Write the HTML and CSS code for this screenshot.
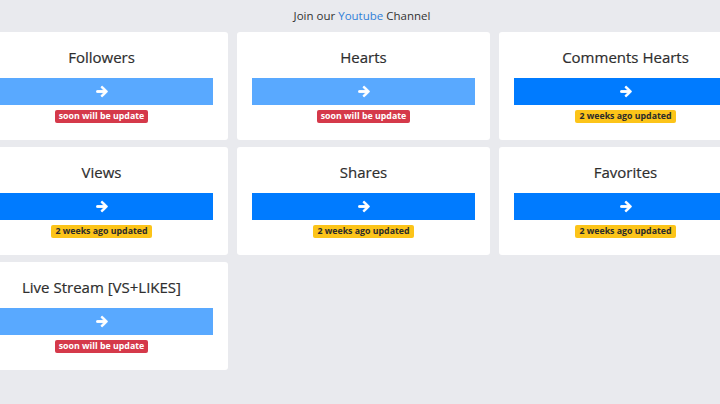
FILE: index.html
```html
<!DOCTYPE html>
<html lang="en">
<head>
<meta charset="utf-8">
<title>Dashboard</title>
<link rel="stylesheet" href="styles.css">
</head>
<body>
<header class="top">Join our <a class="yt" href="#">Youtube</a> Channel</header>
<main class="grid">
  <section class="card">
    <h2 class="title">Followers</h2>
    <a class="bar bar-off" href="#"><svg class="arrow" viewBox="-20 0 488 512"><path d="M190.5 66.9l22.2-22.2c9.4-9.4 24.6-9.4 33.9 0L441 239c9.4 9.4 9.4 24.6 0 33.9L246.6 467.3c-9.4 9.4-24.6 9.4-33.9 0l-22.2-22.2c-9.5-9.5-9.3-25 .4-34.3L311.4 296H24c-13.3 0-24-10.7-24-24v-32c0-13.3 10.7-24 24-24h287.4L190.9 101.2c-9.8-9.3-10-24.8-.4-34.3z"/></svg></a>
    <span class="badge badge-red">soon will be update</span>
  </section>
  <section class="card">
    <h2 class="title">Hearts</h2>
    <a class="bar bar-off" href="#"><svg class="arrow" viewBox="-20 0 488 512"><path d="M190.5 66.9l22.2-22.2c9.4-9.4 24.6-9.4 33.9 0L441 239c9.4 9.4 9.4 24.6 0 33.9L246.6 467.3c-9.4 9.4-24.6 9.4-33.9 0l-22.2-22.2c-9.5-9.5-9.3-25 .4-34.3L311.4 296H24c-13.3 0-24-10.7-24-24v-32c0-13.3 10.7-24 24-24h287.4L190.9 101.2c-9.8-9.3-10-24.8-.4-34.3z"/></svg></a>
    <span class="badge badge-red">soon will be update</span>
  </section>
  <section class="card">
    <h2 class="title">Comments Hearts</h2>
    <a class="bar" href="#"><svg class="arrow" viewBox="-20 0 488 512"><path d="M190.5 66.9l22.2-22.2c9.4-9.4 24.6-9.4 33.9 0L441 239c9.4 9.4 9.4 24.6 0 33.9L246.6 467.3c-9.4 9.4-24.6 9.4-33.9 0l-22.2-22.2c-9.5-9.5-9.3-25 .4-34.3L311.4 296H24c-13.3 0-24-10.7-24-24v-32c0-13.3 10.7-24 24-24h287.4L190.9 101.2c-9.8-9.3-10-24.8-.4-34.3z"/></svg></a>
    <span class="badge badge-yellow">2 weeks ago updated</span>
  </section>
  <section class="card">
    <h2 class="title">Views</h2>
    <a class="bar" href="#"><svg class="arrow" viewBox="-20 0 488 512"><path d="M190.5 66.9l22.2-22.2c9.4-9.4 24.6-9.4 33.9 0L441 239c9.4 9.4 9.4 24.6 0 33.9L246.6 467.3c-9.4 9.4-24.6 9.4-33.9 0l-22.2-22.2c-9.5-9.5-9.3-25 .4-34.3L311.4 296H24c-13.3 0-24-10.7-24-24v-32c0-13.3 10.7-24 24-24h287.4L190.9 101.2c-9.8-9.3-10-24.8-.4-34.3z"/></svg></a>
    <span class="badge badge-yellow">2 weeks ago updated</span>
  </section>
  <section class="card">
    <h2 class="title">Shares</h2>
    <a class="bar" href="#"><svg class="arrow" viewBox="-20 0 488 512"><path d="M190.5 66.9l22.2-22.2c9.4-9.4 24.6-9.4 33.9 0L441 239c9.4 9.4 9.4 24.6 0 33.9L246.6 467.3c-9.4 9.4-24.6 9.4-33.9 0l-22.2-22.2c-9.5-9.5-9.3-25 .4-34.3L311.4 296H24c-13.3 0-24-10.7-24-24v-32c0-13.3 10.7-24 24-24h287.4L190.9 101.2c-9.8-9.3-10-24.8-.4-34.3z"/></svg></a>
    <span class="badge badge-yellow">2 weeks ago updated</span>
  </section>
  <section class="card">
    <h2 class="title">Favorites</h2>
    <a class="bar" href="#"><svg class="arrow" viewBox="-20 0 488 512"><path d="M190.5 66.9l22.2-22.2c9.4-9.4 24.6-9.4 33.9 0L441 239c9.4 9.4 9.4 24.6 0 33.9L246.6 467.3c-9.4 9.4-24.6 9.4-33.9 0l-22.2-22.2c-9.5-9.5-9.3-25 .4-34.3L311.4 296H24c-13.3 0-24-10.7-24-24v-32c0-13.3 10.7-24 24-24h287.4L190.9 101.2c-9.8-9.3-10-24.8-.4-34.3z"/></svg></a>
    <span class="badge badge-yellow">2 weeks ago updated</span>
  </section>
  <section class="card">
    <h2 class="title">Live Stream [VS+LIKES]</h2>
    <a class="bar bar-off" href="#"><svg class="arrow" viewBox="-20 0 488 512"><path d="M190.5 66.9l22.2-22.2c9.4-9.4 24.6-9.4 33.9 0L441 239c9.4 9.4 9.4 24.6 0 33.9L246.6 467.3c-9.4 9.4-24.6 9.4-33.9 0l-22.2-22.2c-9.5-9.5-9.3-25 .4-34.3L311.4 296H24c-13.3 0-24-10.7-24-24v-32c0-13.3 10.7-24 24-24h287.4L190.9 101.2c-9.8-9.3-10-24.8-.4-34.3z"/></svg></a>
    <span class="badge badge-red">soon will be update</span>
  </section>
</main>
</body>
</html>
```
FILE: styles.css
```css
html, body {
  margin: 0;
  padding: 0;
}
body {
  background: #e9eaee;
  font-family: "Open Sans", "Noto Sans", "Liberation Sans", sans-serif;
  color: #333;
  width: 720px;
  height: 404px;
  overflow: hidden;
}
.top {
  height: 32px;
  display: flex;
  align-items: center;
  justify-content: center;
  padding-left: 4px;
  font-size: 11.5px;
  color: #333;
  box-sizing: border-box;
  padding-bottom: 2px;
}
.yt {
  color: #3080d8;
  text-decoration: none;
  margin: 0 3px;
}
.grid {
  display: grid;
  grid-template-columns: repeat(3, 253px);
  column-gap: 9px;
  row-gap: 7px;
  width: 777px;
  margin-left: -25px;
}
.card {
  background: #fff;
  border-radius: 3px;
  height: 108px;
  box-sizing: border-box;
  padding: 13px 15px 0;
  display: flex;
  flex-direction: column;
  align-items: center;
}
.title {
  margin: 0;
  font-size: 15px;
  font-weight: 400;
  line-height: 24px;
  color: #2e2e2e;
  -webkit-text-stroke: 0.2px #2e2e2e;
}
.bar {
  align-self: stretch;
  margin-top: 9px;
  height: 27px;
  background: #007bff;
  display: flex;
  align-items: center;
  justify-content: center;
}
.bar-off {
  background: #59a9ff;
}
.arrow {
  width: 12px;
  height: 13px;
  fill: #fff;
  stroke: #fff;
  stroke-width: 36;
  stroke-linejoin: round;
}
.badge {
  margin-top: 5px;
  font-size: 8.8px;
  font-weight: 700;
  line-height: 13px;
  padding: 0 4px;
  border-radius: 2px;
}
.badge-red {
  background: #d5394a;
  color: #fff;
}
.badge-yellow {
  background: #fcc419;
  color: #2b2b2b;
}
```
